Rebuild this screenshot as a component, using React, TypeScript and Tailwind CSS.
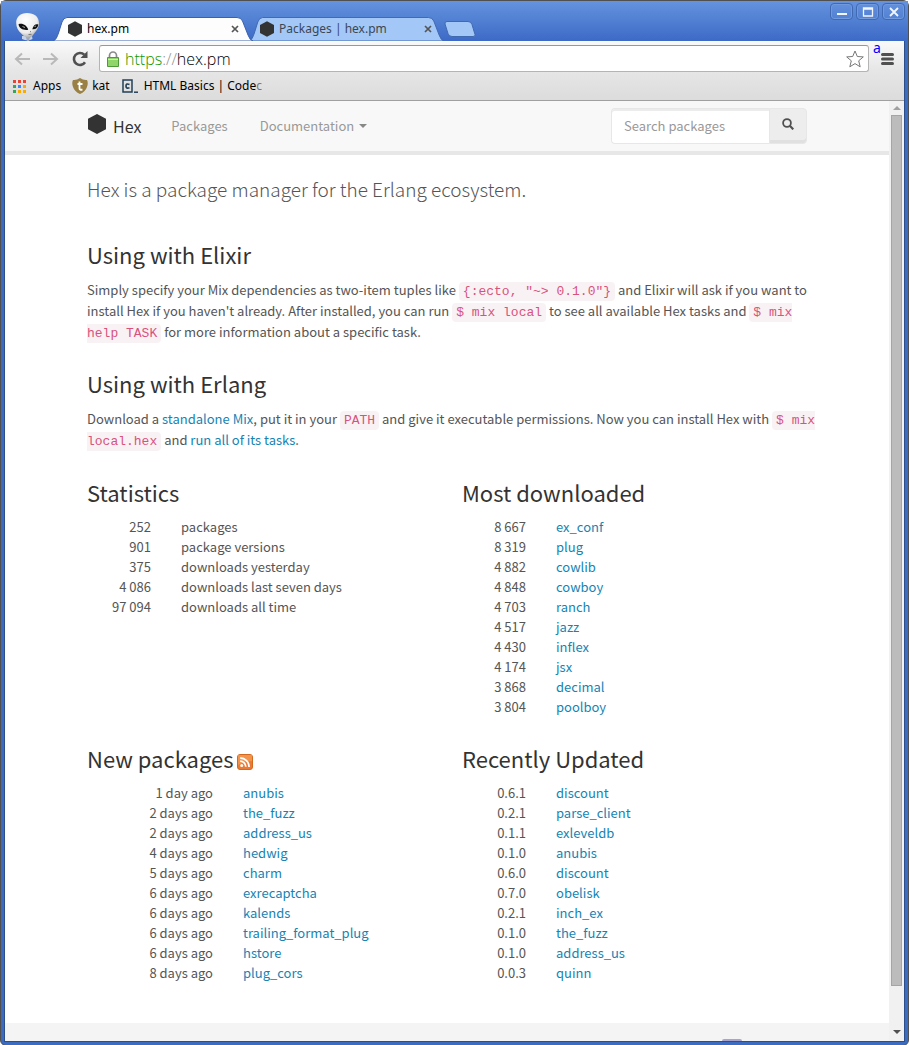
import type { ReactNode } from 'react';

const links = 'text-[#1484b4] hover:underline';

function Hexagon({ className }: { className: string }) {
  return (
    <svg viewBox="0 0 18 20" className={className} aria-hidden="true">
      <path d="M9 0 18 4.8v10.4L9 20 0 15.2V4.8z" fill="#333" />
    </svg>
  );
}

function Alien() {
  return (
    <svg viewBox="0 0 28 30" className="h-[30px] w-7 shrink-0" aria-hidden="true">
      <defs>
        <radialGradient id="skull" cx="0.42" cy="0.3" r="0.75">
          <stop offset="0" stopColor="#fff" />
          <stop offset="0.65" stopColor="#ececec" />
          <stop offset="1" stopColor="#9a9a9a" />
        </radialGradient>
      </defs>
      <path d="M9 25h10l.5 3q-5 2.500-10.500 0z" fill="#c4d2ea" />
      <path d="M13 26h4l-1 4h-2z" fill="#9fa8b8" />
      <path d="M14 2C7.500 2 3 6 3.200 12c.1 4.500 1.800 7.500 5 10.500 3 2.800 5 4.500 7 4.500s4-1.500 5.600-4C23.500 19.500 26 16.500 26 12 26 5.500 21 2 14 2z" fill="url(#skull)" />
      <path d="M5.500 13.200c4-1.300 8.300 1 9.700 5.500-4.200.9-9.200-1-9.700-5.500z" fill="#111" />
      <path d="M25.300 13.500c-2.700-1-5 .8-6 4.800 3.400.5 5.700-1.600 6-4.800z" fill="#111" />
      <path d="M9.500 15.500l2.500 1M21.500 15.500l1.500-.5" stroke="#bbb" strokeWidth=".9" />
      <path d="M15.500 23.500l3-.2M17 20.500l1 .3" stroke="#777" />
    </svg>
  );
}

function TabShape({ active }: { active?: boolean }) {
  return (
    <svg viewBox="0 0 200 24" preserveAspectRatio="none" className="absolute inset-0 h-full w-full" aria-hidden="true">
      <path
        d="M0 24C3 23 4 20 5.500 16L9 5Q10.500.5 14 .5H184Q188 .5 189.500 4L195 18Q197 23.500 200 24z"
        fill={active ? '#fdfdfd' : '#a3c8f7'}
        stroke={active ? '#3a62ac' : '#4069ae'}
        strokeWidth="1"
      />
    </svg>
  );
}

function Tab({ title, active }: { title: string; active?: boolean }) {
  return (
    <div className={active ? 'relative z-10 flex h-6 w-[200px] items-center pr-[14px] pl-[15px]' : 'relative -ml-1 flex h-6 w-[195px] items-center pr-3 pl-[11px]'}>
      <TabShape active={active} />
      <Hexagon className="relative h-4 w-[14px]" />
      <button type="button" className={active ? 'relative ml-[5px] flex-1 text-left text-[12px] leading-4 text-black' : 'relative ml-[5px] flex-1 text-left text-[12px] leading-4 text-[#3c4654]'}>
        {title}
      </button>
      <button type="button" aria-label={`Close ${title}`} className="relative">
        <svg viewBox="0 0 8 8" className="h-2 w-2">
          <path d="M1 1l6 6M7 1 1 7" stroke="#555" strokeWidth="1.700" />
        </svg>
      </button>
    </div>
  );
}

function WindowButton({ label, children }: { label: string; children: ReactNode }) {
  return (
    <button type="button" aria-label={label} className="flex h-[17px] w-[23px] items-center justify-center rounded-sm border border-[#4069b2] shadow-[inset_0_0_0_1px_#7199de]">
      <svg viewBox="0 0 12 10" className="h-[10px] w-3" fill="none" stroke="#f2f6fc">
        {children}
      </svg>
    </button>
  );
}

function TitleBar() {
  return (
    <header className="flex h-10 bg-linear-to-b from-[#6593de] to-[#3d6ac6] pl-3">
      <div className="flex items-end">
        <Alien />
      </div>
      <nav aria-label="Tabs" className="ml-3 flex items-end">
        <Tab title="hex.pm" active />
        <Tab title="Packages | hex.pm" />
        <button type="button" aria-label="New tab" className="mb-1 self-end">
          <svg viewBox="0 0 32 16" className="h-4 w-8">
            <path d="M3 .5h21q3 0 4 3l3 10q.5 2-2 2H8q-3 0-4-3L1 3Q.5.5 3 .5z" fill="#a3c8f7" stroke="#4069ae" />
          </svg>
        </button>
      </nav>
      <div className="mt-[2px] mr-[3px] ml-auto flex gap-[3px]">
        <WindowButton label="Minimize"><path d="M1 7h10" strokeWidth="2" /></WindowButton>
        <WindowButton label="Maximize"><path d="M1.500 1h9v8h-9zM1.500 2h9" strokeWidth="1.300" /></WindowButton>
        <WindowButton label="Close"><path d="M2 1l8 8M10 1 2 9" strokeWidth="1.800" /></WindowButton>
      </div>
    </header>
  );
}

const appColours = ['#ea4335', '#ea4335', '#ea4335', '#34a853', '#4285f4', '#fbab00', '#34a853', '#fbab00', '#fbab00'];

function Toolbar() {
  return (
    <div className="border-b border-[#a0a0a0] bg-linear-to-b from-[#fafafa] via-[#e6e6e6] to-[#dcdcdc] pt-1">
      <div className="flex items-center pr-[10px] pl-[9px]">
        <button type="button" aria-label="Back">
          <svg viewBox="0 0 16 14" className="h-[14px] w-4" fill="none" stroke="#b9b9b9" strokeWidth="2">
            <path d="M8 1.500 2 7l6 5.500M2 7h14" />
          </svg>
        </button>
        <button type="button" aria-label="Forward" className="ml-[13px]">
          <svg viewBox="0 0 16 14" className="h-[14px] w-4" fill="none" stroke="#b9b9b9" strokeWidth="2">
            <path d="M8 1.500l6 5.500-6 5.500M14 7H0" />
          </svg>
        </button>
        <button type="button" aria-label="Reload" className="ml-[13px]">
          <svg viewBox="0 0 16 16" className="h-4 w-4" fill="none">
            <path d="M13 11.200A6 6 0 1 1 12.200 3.700" stroke="#505050" strokeWidth="2.600" />
            <path d="M15.500 0v7h-7z" fill="#505050" />
          </svg>
        </button>
        <div className="ml-[11px] flex h-[27px] flex-1 items-center rounded-[3px] border border-[#b4b4b4] border-t-[#989898] bg-white pr-1 pl-[7px]">
          <svg viewBox="0 0 12 16" className="h-4 w-3" aria-hidden="true">
            <path d="M2.500 8V4.500a3.500 3.500 0 0 1 7 0V8" fill="none" stroke="#8a8a8a" strokeWidth="1.700" />
            <path d="M.5 6.500h11v9H.5z" fill="#8fd56a" stroke="#4f9a38" />
            <path d="M1 8.500h10" stroke="#c8f0b4" />
          </svg>
          <label htmlFor="address" className="ml-[6px] font-['Open_Sans'] text-[16px] font-light text-[#909090]">
            <span className="text-[#0b9800]">https</span>://
          </label>
          <input id="address" defaultValue="hex.pm" className="min-w-0 flex-1 bg-transparent font-['Open_Sans'] text-[16px] font-light text-black outline-none" />
          <button type="button" aria-label="Bookmark this page">
            <svg viewBox="0 0 18 18" className="h-[18px] w-[18px]">
              <path d="M9 1l2.300 5.500 6 .4-4.600 3.900 1.500 6L9 13.600l-5.200 3.200 1.500-6L.7 6.900l6-.4z" fill="#fff" stroke="#777" strokeLinejoin="round" />
            </svg>
          </button>
        </div>
        <button type="button" aria-label="Menu" className="relative ml-3">
          <svg viewBox="0 0 13 14" className="h-[14px] w-[13px]">
            <path d="M1.500 2.500h10M1.500 7h10M1.500 11.500h10" stroke="#505050" strokeWidth="3" strokeLinecap="round" />
          </svg>
          <span className="absolute -top-3 -left-2 font-['Noto_Sans'] text-[14px] leading-4 text-[#0000ff]">a</span>
        </button>
      </div>
      <nav aria-label="Bookmarks" className="flex h-7 items-center pl-2 text-[12px] text-black">
        <a href="#apps" className="flex items-center gap-[7px]">
          <svg viewBox="0 0 13 13" className="h-[13px] w-[13px]" aria-hidden="true">
            {appColours.map((c, i) => (
              <rect key={i} x={(i % 3) * 5} y={Math.floor(i / 3) * 5} width="3" height="3" fill={c} />
            ))}
          </svg>
          Apps
        </a>
        <a href="#kat" className="ml-[11px] flex items-center gap-1">
          <svg viewBox="0 0 16 16" className="h-4 w-4" aria-hidden="true">
            <path d="M1 2q3.500.5 7-2 3.500 2.500 7 2 1.500 3 0 7-1.500 4.500-7 7-5.500-2.500-7-7-1.500-4 0-7z" fill="#9a8043" />
            <path d="M7.500 3.500v7q0 1.500 3 1.200M5.500 6h5" fill="none" stroke="#fff" strokeWidth="1.800" />
          </svg>
          kat
        </a>
        <a href="#html-basics" className="ml-3 flex items-center gap-[5px]">
          <svg viewBox="0 0 17 14" className="h-[14px] w-[17px]" fill="none" stroke="#234058" aria-hidden="true">
            <path d="M1 1h9v12H1z" strokeWidth="1.500" />
            <path d="M7.500 5.500q-3.500-1.500-3.500 1.500t3.500 1.800" strokeWidth="1.700" />
            <path d="M12 13.200h4" strokeWidth="1.500" />
          </svg>
          <span>HTML Basics | Code<span className="text-[#777]">c</span></span>
        </a>
      </nav>
    </div>
  );
}

function NavBar() {
  return (
    <div className="border-b-4 border-[#e7e7e7] bg-[#f8f8f8]">
      <div className="mx-auto flex h-[50px] max-w-[750px] items-center px-[15px]">
        <a href="#home" className="flex items-center gap-[6px] text-[16px] leading-6 text-[#333]">
          <Hexagon className="mb-1 h-5 w-5" />
          Hex
        </a>
        <nav className="ml-[30px] flex gap-8 text-[13px] text-[#999]">
          <a href="#packages">Packages</a>
          <a href="#documentation" className="flex items-center gap-[5px]">
            Documentation
            <svg viewBox="0 0 8 4" className="h-1 w-2" aria-hidden="true"><path d="M0 0h8L4 4z" fill="#888" /></svg>
          </a>
        </nav>
        <form className="ml-auto flex h-9" onSubmit={(e) => e.preventDefault()}>
          <input
            type="search"
            aria-label="Search packages"
            placeholder="Search packages"
            className="w-[158px] rounded-l border border-r-0 border-[#e7e7e7] bg-white px-3 text-[13px] shadow-[inset_0_2px_0_#ececec] outline-none placeholder:text-[#999]"
          />
          <button type="submit" aria-label="Search" className="flex w-[38px] items-center justify-center rounded-r border border-[#e7e7e7] bg-[#ededed] pb-1 shadow-[inset_0_-3px_0_#e0e0e0]">
            <svg viewBox="0 0 12 12" className="h-3 w-3" fill="none" stroke="#505050">
              <circle cx="5" cy="5" r="3.900" strokeWidth="1.800" />
              <path d="M7.800 7.800 11.300 11.300" strokeWidth="2.200" />
            </svg>
          </button>
        </form>
      </div>
    </div>
  );
}

function Code({ children }: { children: ReactNode }) {
  return <code className="rounded bg-[#f9f2f4] px-1 py-[2px] font-['Liberation_Mono'] text-[13px] leading-none text-[#d8527e]">{children}</code>;
}

function Heading({ children }: { children: ReactNode }) {
  return <h2 className="mb-[10px] flex h-[26px] items-start gap-[3px] text-[22px] leading-[22px] text-[#333]">{children}</h2>;
}

function Listing({ title, rows, wide, plain }: { title: ReactNode; rows: [string, string][]; wide?: boolean; plain?: boolean }) {
  return (
    <section>
      <Heading>{title}</Heading>
      <table className="w-full table-fixed text-[13px] leading-5">
        <tbody>
          {rows.map(([value, name], i) => (
            <tr key={i}>
              <td className={wide ? 'w-[156px] pr-[30px] text-right whitespace-nowrap' : 'w-[94px] pr-[30px] text-right whitespace-nowrap'}>{value}</td>
              <td className="whitespace-nowrap">{plain ? name : <a href={`#${name}`} className={links}>{name}</a>}</td>
            </tr>
          ))}
        </tbody>
      </table>
    </section>
  );
}

const statistics: [string, string][] = [
  ['252', 'packages'],
  ['901', 'package versions'],
  ['375', 'downloads yesterday'],
  ['4 086', 'downloads last seven days'],
  ['97 094', 'downloads all time'],
];
const mostDownloaded: [string, string][] = [
  ['8 667', 'ex_conf'],
  ['8 319', 'plug'],
  ['4 882', 'cowlib'],
  ['4 848', 'cowboy'],
  ['4 703', 'ranch'],
  ['4 517', 'jazz'],
  ['4 430', 'inflex'],
  ['4 174', 'jsx'],
  ['3 868', 'decimal'],
  ['3 804', 'poolboy'],
];
const newPackages: [string, string][] = [
  ['1 day ago', 'anubis'],
  ['2 days ago', 'the_fuzz'],
  ['2 days ago', 'address_us'],
  ['4 days ago', 'hedwig'],
  ['5 days ago', 'charm'],
  ['6 days ago', 'exrecaptcha'],
  ['6 days ago', 'kalends'],
  ['6 days ago', 'trailing_format_plug'],
  ['6 days ago', 'hstore'],
  ['8 days ago', 'plug_cors'],
];
const recentlyUpdated: [string, string][] = [
  ['0.6.1', 'discount'],
  ['0.2.1', 'parse_client'],
  ['0.1.1', 'exleveldb'],
  ['0.1.0', 'anubis'],
  ['0.6.0', 'discount'],
  ['0.7.0', 'obelisk'],
  ['0.2.1', 'inch_ex'],
  ['0.1.0', 'the_fuzz'],
  ['0.1.0', 'address_us'],
  ['0.0.3', 'quinn'],
];

function FeedIcon() {
  return (
    <svg viewBox="0 0 16 16" className="mt-[7px] h-4 w-4" role="img" aria-label="RSS feed">
      <rect x=".5" y=".5" width="15" height="15" rx="2.500" fill="#ea7a34" stroke="#d2691e" />
      <path d="M1 1h14v6Q8 7 1 11z" fill="#f6a55c" opacity=".6" />
      <circle cx="4.700" cy="11.500" r="1.500" fill="#fff" />
      <path d="M3.200 7.200a5.600 5.600 0 0 1 5.600 5.600M3.200 4a8.900 8.900 0 0 1 8.900 8.900" fill="none" stroke="#fff" strokeWidth="1.800" />
    </svg>
  );
}

function Page() {
  return (
    <div className="min-w-0 flex-1 bg-white font-['Noto_Sans_CJK_SC',sans-serif] text-[#555]">
      <NavBar />
      <main className="mx-auto max-w-[750px] px-[15px] pt-5 pb-10">
        <p className="mb-10 text-[19px] leading-7 font-light">Hex is a package manager for the Erlang ecosystem.</p>
        <section className="mb-[30px] text-[13px] leading-[21px]">
          <Heading>Using with Elixir</Heading>
          <p className="-mr-[10px]">
            Simply specify your Mix dependencies as two-item tuples like <Code>{'{:ecto, "~> 0.1.0"}'}</Code> and Elixir will ask if you want to install Hex if you haven't already. After installed, you can run <Code>$ mix local</Code> to see all available Hex tasks and <Code>$ mix help TASK</Code> for more information about a specific task.
          </p>
        </section>
        <section className="mb-[31px] text-[13px] leading-[21px]">
          <Heading>Using with Erlang</Heading>
          <p className="-mr-[10px]">
            Download a <a href="#standalone" className={links}>standalone Mix</a>, put it in your <Code>PATH</Code> and give it executable permissions. Now you can install Hex with <Code>$ mix local.hex</Code> and <a href="#tasks" className={links}>run all of its tasks</a>.
          </p>
        </section>
        <div className="grid grid-cols-2 gap-[30px]">
          <Listing title="Statistics" rows={statistics} plain />
          <Listing title="Most downloaded" rows={mostDownloaded} />
          <Listing title={<>New packages <FeedIcon /></>} rows={newPackages} wide />
          <Listing title="Recently Updated" rows={recentlyUpdated} />
        </div>
      </main>
      <footer className="flex h-[18px] items-end justify-end bg-[#f4f4f4] pr-[147px]">
        <div className="h-[2px] w-5 rounded-t-sm bg-[#a9a4cf]" />
      </footer>
    </div>
  );
}

function ScrollBar() {
  return (
    <div className="flex w-[15px] shrink-0 flex-col items-center bg-[#f1f1f1]" aria-hidden="true">
      <svg viewBox="0 0 8 4" className="my-[5px] h-1 w-2"><path d="M0 4h8L4 0z" fill="#a0a0a0" /></svg>
      <div className="w-[11px] flex-1 border border-[#a5a5a5] bg-[#bcbcbc]" />
      <svg viewBox="0 0 8 4" className="mt-[44px] mb-[7px] h-1 w-2"><path d="M0 0h8L4 4z" fill="#505050" /></svg>
    </div>
  );
}

export default function App() {
  return (
    <div className="min-h-screen rounded-md border border-[#505050] bg-[#3b6cc0] pb-[3px] font-['Noto_Sans',sans-serif]">
      <TitleBar />
      <div className="mx-[3px] border-x border-b border-[#2c4f8c] bg-[#f1f1f1]">
        <Toolbar />
        <div className="flex">
          <Page />
          <ScrollBar />
        </div>
      </div>
    </div>
  );
}
